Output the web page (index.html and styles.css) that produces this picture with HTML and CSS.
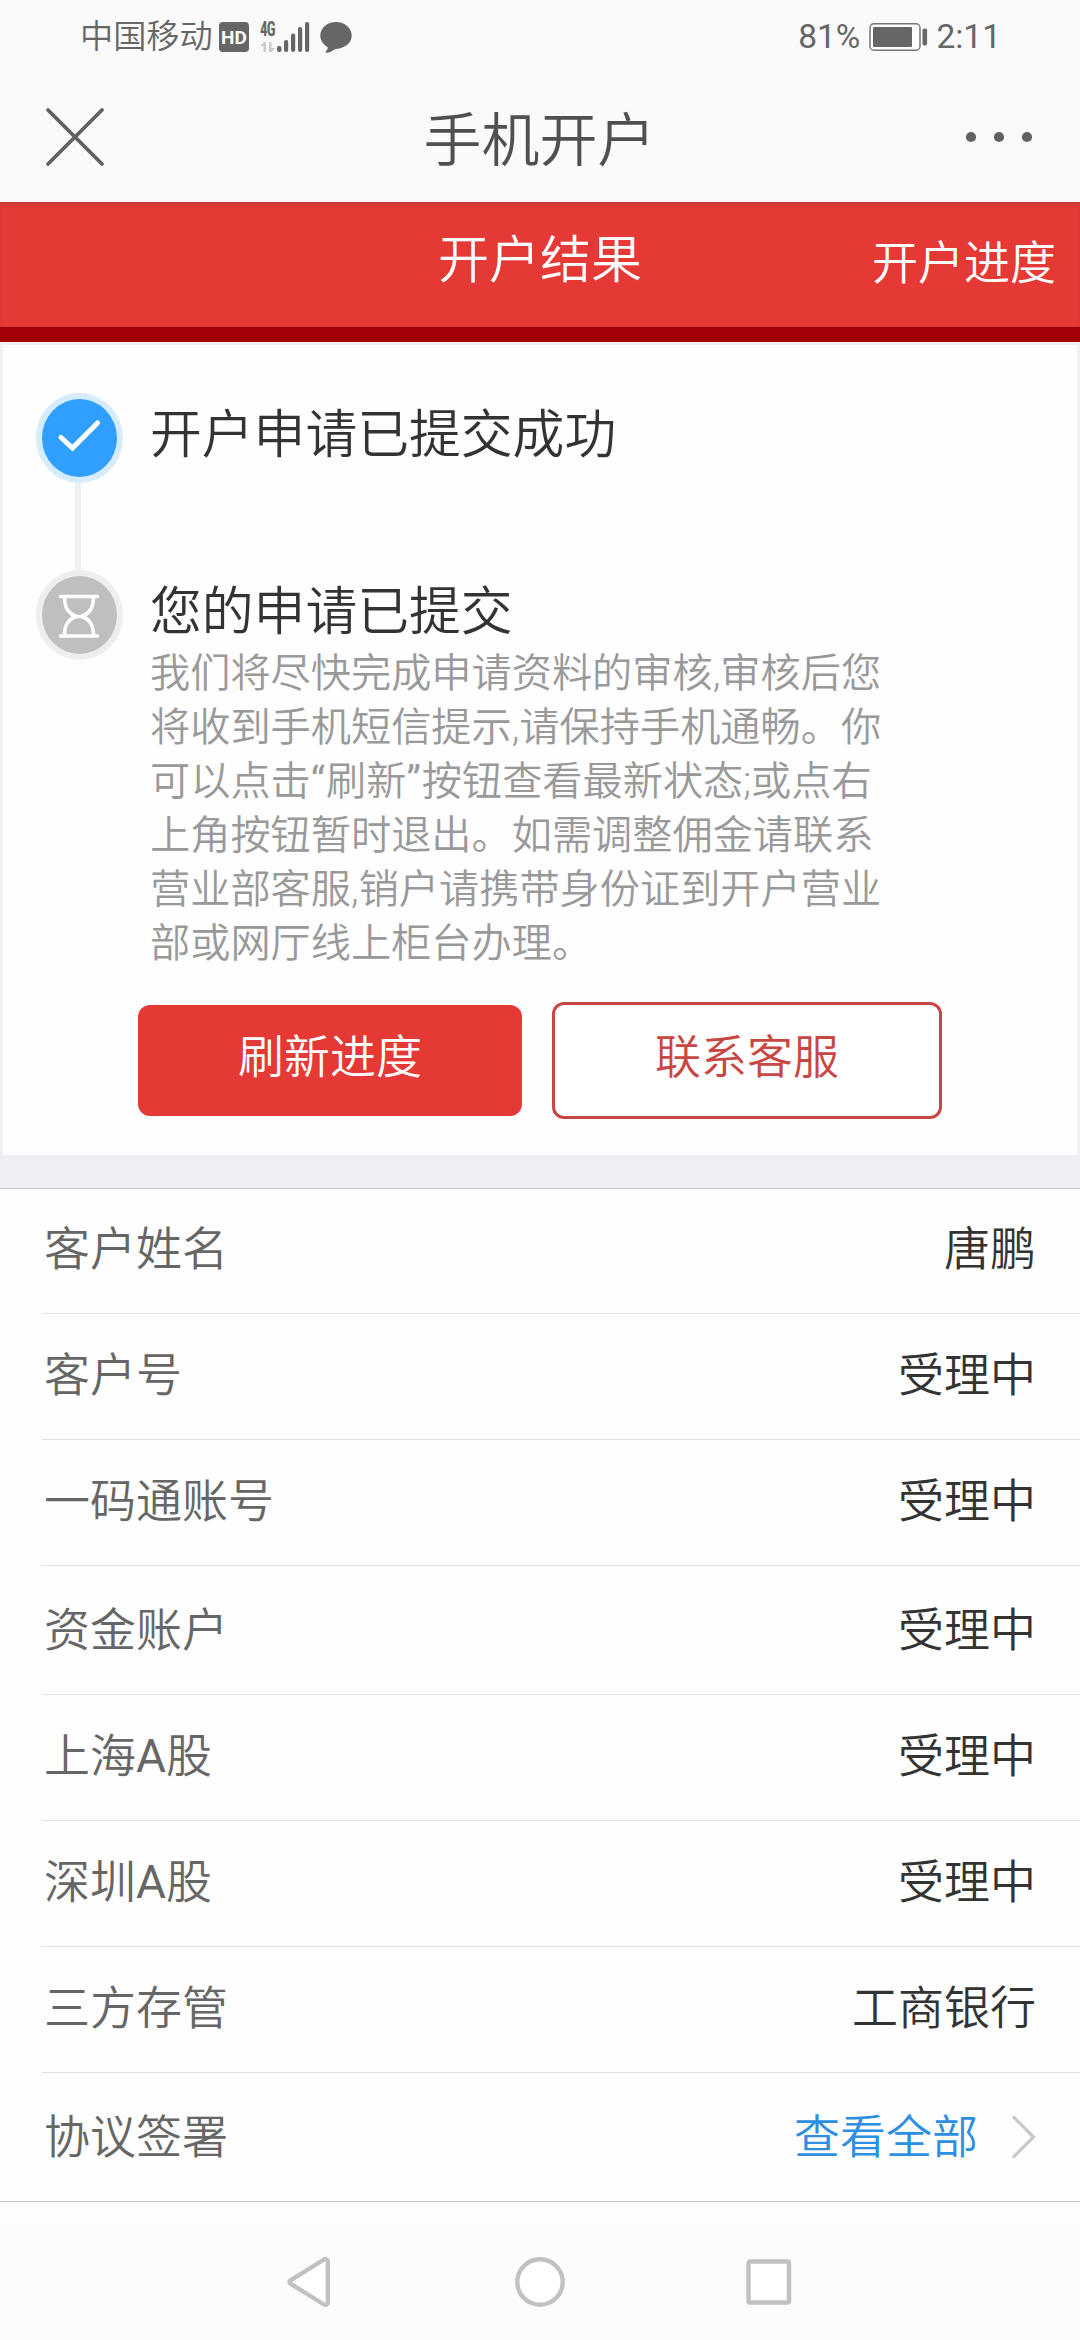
FILE: index.html
```html
<!DOCTYPE html>
<html lang="zh-CN">
<head>
  <meta charset="UTF-8">
  <title>手机开户</title>
  <link rel="stylesheet" href="styles.css">
</head>
<body>
  <div class="status-bar">
    <span class="carrier">中国移动</span>
    <span class="hd">HD</span>
    <div class="network">
      <span class="net-type">4G</span>
      <svg class="signal" width="50" height="32" viewBox="0 0 50 32">
        <g fill="#cbcbcb">
          <path d="M0 25l4-4h2v10H3.500v-6z"/>
          <path d="M9 21h2.500v6h4l-4 4H9z"/>
        </g>
        <g fill="#666">
          <rect x="17" y="25" width="4.500" height="6" rx="2"/>
          <rect x="24" y="19" width="4.200" height="12" rx="2"/>
          <rect x="31" y="12.500" width="4.200" height="18.500" rx="2"/>
          <rect x="38" y="6" width="4.200" height="25" rx="2"/>
          <rect x="45" y="1" width="4.200" height="30" rx="2"/>
        </g>
      </svg>
    </div>
    <svg class="bubble" width="32" height="31" viewBox="0 0 32 31">
      <path fill="#666" d="M16 0C7.200 0 .3 6 .3 13.500c0 4.600 2.600 8.500 6.700 11.200 1 .7 1 1.500.4 2.500l-1.600 2.300c-.5.800-.1 1.300.8 1.200 3-.2 5.700-1.400 7.600-3 .6-.5 1.200-.7 2-.8C25 26.300 31.700 21 31.700 13.500 31.700 6 24.800 0 16 0z"/>
    </svg>
    <span class="percent">81%</span>
    <svg class="battery" width="59" height="28" viewBox="0 0 59 28">
      <rect x="1" y=".8" width="50" height="26.400" rx="4" fill="#fff" stroke="#777" stroke-width="1.500"/>
      <rect x="4" y="4" width="39" height="20" rx="1" fill="#666"/>
      <rect x="53.500" y="5.500" width="4.600" height="17" rx="2" fill="#666"/>
    </svg>
    <span class="clock">2:11</span>
  </div>

  <div class="title-bar">
    <svg class="close" width="60" height="60" viewBox="0 0 60 60">
      <path d="M3 3l54 54M57 3L3 57" fill="none" stroke="#616161" stroke-width="3.800" stroke-linecap="round"/>
    </svg>
    <h1>手机开户</h1>
    <svg class="more" width="68" height="12" viewBox="0 0 68 12" fill="#616161">
      <circle cx="6" cy="6" r="5.100"/>
      <circle cx="34" cy="6" r="5.100"/>
      <circle cx="62" cy="6" r="5.100"/>
    </svg>
  </div>

  <div class="banner">
    <span></span>
    <h2>开户结果</h2>
    <a class="progress-link">开户进度</a>
  </div>

  <div class="result">
    <div class="step">
      <div class="marker done">
        <svg width="75" height="78" viewBox="0 0 75 78">
          <path d="M19 38.500l11.500 10.500L55.500 24" fill="none" stroke="#fff" stroke-width="5" stroke-linecap="round"/>
        </svg>
      </div>
      <h3>开户申请已提交成功</h3>
    </div>
    <div class="connector"></div>
    <div class="step">
      <div class="marker waiting">
        <svg width="75" height="78" viewBox="0 0 75 78">
          <g fill="none" stroke="#fff" stroke-width="3.600" stroke-linecap="round">
            <path d="M18.500 20.500h37M18.500 60h37"/>
            <path d="M22.500 21c0 10 3 15.500 11.500 19.500-8.500 3.500-11.500 9-11.500 19M51.500 21c0 10-3 15.500-11.500 19.500 8.500 3.500 11.500 9 11.500 19"/>
          </g>
          <path d="M33 38.800h8v3.400h-8z" fill="#fff"/>
        </svg>
      </div>
      <div>
        <h3>您的申请已提交</h3>
        <p class="desc">我们将尽快完成申请资料的审核,审核后您<br>将收到手机短信提示,请保持手机通畅。你<br>可以点击<span class="quote">“</span>刷新<span class="quote">”</span>按钮查看最新状态;或点右<br>上角按钮暂时退出。如需调整佣金请联系<br>营业部客服,销户请携带身份证到开户营业<br>部或网厅线上柜台办理。</p>
      </div>
    </div>
    <div class="buttons">
      <button class="btn refresh">刷新进度</button>
      <button class="btn contact">联系客服</button>
    </div>
  </div>

  <ul class="info">
    <li><span class="label">客户姓名</span><span>唐鹏</span></li>
    <li><span class="label">客户号</span><span>受理中</span></li>
    <li><span class="label">一码通账号</span><span>受理中</span></li>
    <li class="tall"><span class="label">资金账户</span><span>受理中</span></li>
    <li><span class="label">上海<span class="latin">A</span>股</span><span>受理中</span></li>
    <li><span class="label">深圳<span class="latin">A</span>股</span><span>受理中</span></li>
    <li><span class="label">三方存管</span><span>工商银行</span></li>
    <li class="tall">
      <span class="label">协议签署</span>
      <a class="view-all">查看全部
        <svg width="26" height="46" viewBox="0 0 26 46">
          <path d="M3 2.500l20.500 20.500L3 43.500" fill="none" stroke="#c7c7cc" stroke-width="3.200"/>
        </svg>
      </a>
    </li>
  </ul>

  <div class="nav-bar">
    <svg width="506" height="52" viewBox="0 0 506 52" fill="#fff" stroke="#c1c1c1" stroke-width="4.400" stroke-linejoin="round">
      <path d="M3.500 24.300L37 3.500c1.600-1 3.800 0 3.800 2v41c0 2-2.200 3-3.800 2L3.500 27.700c-1.500-.9-1.500-2.500 0-3.400z"/>
      <circle cx="253" cy="26" r="22.700"/>
      <rect x="461.500" y="5.500" width="40.500" height="41" rx="1.500"/>
    </svg>
  </div>
</body>
</html>
```

FILE: styles.css
```css
* {
  box-sizing: border-box;
  margin: 0;
  padding: 0;
}
body {
  width: 1080px;
  height: 2340px;
  display: flex;
  flex-direction: column;
  overflow: hidden;
  font-family: Roboto, "Noto Sans CJK SC", sans-serif;
  font-weight: 350;
  background: #fefefe;
  color: #333;
}
h1, h2, h3 {
  font-weight: 350;
}
svg {
  display: block;
  flex: none;
}

/* status bar */
.status-bar {
  height: 72px;
  padding: 2px 79px 0 80px;
  display: flex;
  align-items: center;
  background: #fafafa;
  color: #666;
  font-size: 33.2px;
  line-height: 70px;
  white-space: nowrap;
}
.carrier {
  width: 139px;
  font-weight: 350;
  line-height: 74px;
}
.hd {
  width: 30px;
  height: 30px;
  border-radius: 4px;
  background: #666;
  color: #fafafa;
  font: bold 19px/31px Roboto, sans-serif;
  text-align: center;
}
.network {
  display: grid;
  margin-left: 11px;
}
.net-type, .signal {
  grid-area: 1 / 1;
}
.net-type {
  font: bold 20px/17px "Roboto Condensed", Roboto, sans-serif;
  letter-spacing: -1px;
  transform: scaleX(.75);
  transform-origin: left;
  align-self: start;
}
.bubble {
  margin-left: 10px;
}
.percent {
  margin-left: auto;
  font-weight: 400;
  font-size: 33.5px;
}
.battery {
  margin: 0 8px 0 9px;
}
.clock {
  font-weight: 400;
  font-size: 33.5px;
}

/* page title */
.title-bar {
  height: 130px;
  padding: 0 47px 0 45px;
  display: flex;
  align-items: center;
  justify-content: space-between;
  background: #fafafa;
}
h1 {
  padding: 7px 0 0 9px;
  font-size: 58px;
  line-height: 120px;
  color: #505050;
}

/* red banner */
.banner {
  height: 140px;
  padding: 0 24px 0 0;
  display: grid;
  grid-template-columns: 1fr auto 1fr;
  background: #e53935;
  border-bottom: 15px solid #a30008;
  box-shadow: inset 0 3px 3px -1px #b73c3a;
  color: #fff;
}
.banner h2 {
  padding-left: 24px;
  font-size: 51px;
  line-height: 118px;
}
.progress-link {
  font-size: 46px;
  line-height: 122px;
  text-align: right;
}

/* result card */
.result {
  height: 813px;
  padding: 48px 0 0 33px;
  border: 3px solid #f1f1f1;
  border-bottom: 0;
}
.step {
  display: flex;
}
.marker {
  width: 87px;
  height: 90px;
  margin-right: 27px;
  flex: none;
  border: 6px solid;
  border-radius: 50%;
}
.done {
  background: #309fff;
  border-color: #d5ebfe;
}
.waiting {
  background: #bfbfbf;
  border-color: #eee;
}
.connector {
  width: 6px;
  height: 87px;
  margin-left: 39px;
  background: #f1f1f1;
}
h3 {
  font-size: 51.8px;
  line-height: 86px;
}
.desc {
  margin-top: -9px;
  font-size: 40.2px;
  line-height: 54px;
  color: #999;
  white-space: nowrap;
}
.quote {
  font-weight: 400;
  letter-spacing: 1px;
}
.buttons {
  margin-top: 31px;
  padding-left: 102px;
  display: flex;
  align-items: center;
  gap: 30px;
}
.btn {
  font: 350 46px/60px Roboto, "Noto Sans CJK SC", sans-serif;
  border-radius: 12px;
  padding-bottom: 7px;
}
.refresh {
  width: 384px;
  height: 111px;
  border: 0;
  background: #e53935;
  color: #fff;
}
.contact {
  width: 390px;
  height: 117px;
  border: 3px solid #c94743;
  background: #fff;
  color: #c94743;
}

/* account info */
.info {
  list-style: none;
  border-top: 33px solid #efeff4;
  border-bottom: 1px solid #c8c7cc;
  box-shadow: inset 0 1px #c8c7cc;
  padding: 1px 0 0 42px;
}
.info li {
  height: 126px;
  padding: 0 44px 3px 2px;
  display: flex;
  align-items: center;
  justify-content: space-between;
  border-bottom: 1px solid #e3e3e5;
  font-size: 46px;
  line-height: 60px;
}
.info li:first-child {
  height: 125px;
  padding-bottom: 4px;
}
.info .tall {
  height: 129px;
  padding-bottom: 0;
}
.info li:last-child {
  height: 128px;
  border-bottom: 0;
}
.label {
  color: #666;
}
.latin {
  font-weight: 400;
}
.view-all {
  display: flex;
  align-items: center;
  gap: 32px;
  color: #2d8fe2;
}

/* system navigation */
.nav-bar {
  height: 116px;
  margin-top: auto;
  padding: 32px 0 0 287px;
  background: #fcfcfc;
}
```
